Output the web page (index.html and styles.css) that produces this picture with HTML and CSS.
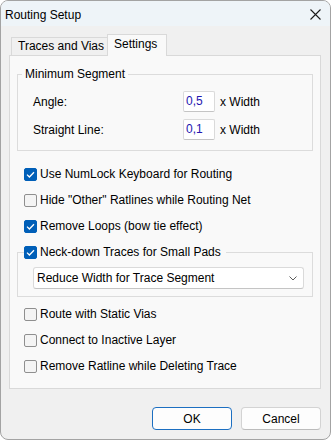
FILE: index.html
```html
<!DOCTYPE html>
<html lang="en">
<head>
    <meta charset="UTF-8">
    <title>Routing Setup</title>
    <link rel="stylesheet" href="styles.css">
</head>
<body>
    <div class="window">
        <div class="titlebar">
            <span class="title">Routing Setup</span>
            <svg class="close" width="11" height="11" viewBox="0 0 11 11">
                <path d="M0.5 0.5 L10.5 10.5 M10.5 0.5 L0.5 10.5" stroke="#1b1b1b" stroke-width="1.1" fill="none"/>
            </svg>
        </div>
        <div class="content">
            <div class="tabs">
                <div class="tab">Traces and Vias</div>
                <div class="tab active">Settings</div>
            </div>
            <div class="panel">
                <fieldset class="group segment">
                    <legend>Minimum Segment</legend>
                    <div class="segment-grid">
                        <span>Angle:</span>
                        <div class="edit">0,5</div>
                        <span class="unit">x Width</span>
                        <span>Straight Line:</span>
                        <div class="edit">0,1</div>
                        <span class="unit">x Width</span>
                    </div>
                </fieldset>

                <div class="checks first">
                    <div class="check on">
                        <span class="box"><svg width="13" height="13" viewBox="0 0 13 13"><path d="M3 6.6 L5.4 9 L10 4.2" stroke="#fff" stroke-width="1.3" fill="none"/></svg></span>
                        Use NumLock Keyboard for Routing
                    </div>
                    <div class="check">
                        <span class="box"></span>
                        Hide "Other" Ratlines while Routing Net
                    </div>
                    <div class="check on">
                        <span class="box"><svg width="13" height="13" viewBox="0 0 13 13"><path d="M3 6.6 L5.4 9 L10 4.2" stroke="#fff" stroke-width="1.3" fill="none"/></svg></span>
                        Remove Loops (bow tie effect)
                    </div>
                </div>

                <fieldset class="group neck">
                    <legend>
                        <span class="check on">
                            <span class="box"><svg width="13" height="13" viewBox="0 0 13 13"><path d="M3 6.6 L5.4 9 L10 4.2" stroke="#fff" stroke-width="1.3" fill="none"/></svg></span>
                            Neck-down Traces for Small Pads
                        </span>
                    </legend>
                    <div class="combo">
                        <span>Reduce Width for Trace Segment</span>
                        <svg width="8" height="5" viewBox="0 0 8 5"><path d="M0.5 0.5 L4 4 L7.5 0.5" stroke="#5c5c5c" stroke-width="1" fill="none"/></svg>
                    </div>
                </fieldset>

                <div class="checks last">
                    <div class="check">
                        <span class="box"></span>
                        Route with Static Vias
                    </div>
                    <div class="check">
                        <span class="box"></span>
                        Connect to Inactive Layer
                    </div>
                    <div class="check">
                        <span class="box"></span>
                        Remove Ratline while Deleting Trace
                    </div>
                </div>
            </div>
            <div class="buttons">
                <button class="btn default">OK</button>
                <button class="btn">Cancel</button>
            </div>
        </div>
    </div>
</body>
</html>
```

FILE: styles.css
```css
body {
    margin: 0;
    background-color: #ffffff;
    font-family: "Liberation Sans", Arial, sans-serif;
    font-size: 12px;
    color: #000000;
}
.window {
    width: 331px;
    height: 440px;
    box-sizing: border-box;
    border: 1px solid #a3a3a3;
    border-radius: 8px;
    overflow: hidden;
    background-color: #f0f0f0;
}
.titlebar {
    height: 25px;
    box-sizing: border-box;
    padding: 2px 9px 0 4px;
    display: flex;
    align-items: center;
    justify-content: space-between;
    background-color: #eef4f8;
}
.title {
    font-size: 12px;
}
.tabs {
    display: flex;
    align-items: flex-end;
    margin: 8px 0 0 10px;
    height: 22px;
    position: relative;
    z-index: 1;
}
.tab {
    box-sizing: border-box;
    border: 1px solid #d9d9d9;
    border-bottom: none;
    padding-left: 6px;
}
.tab:first-child {
    width: 96px;
    height: 18px;
    line-height: 17px;
    border-right: none;
    margin-bottom: 1px;
}
.tab.active {
    width: 60px;
    height: 22px;
    line-height: 18px;
    background-color: #f9f9f9;
}
.panel {
    margin: -1px 9px 0 8px;
    border: 1px solid #d9d9d9;
    background-color: #f9f9f9;
    padding: 11px 0 9px;
}
.group {
    margin: 0 7px;
    padding: 0;
    border: 1px solid #dcdcdc;
    min-inline-size: 0;
}
.group legend {
    line-height: 14px;
    height: 14px;
}
.segment legend {
    margin-left: 4px;
    padding: 0 3px;
}
.segment-grid {
    display: grid;
    grid-template-columns: 150px 32px auto;
    grid-auto-rows: 21px;
    row-gap: 7px;
    align-items: center;
    padding: 10px 0 10px 15px;
}
.edit {
    height: 21px;
    box-sizing: border-box;
    border: 1px solid #dadada;
    border-bottom-color: #c4c4c4;
    border-radius: 2px;
    background-color: #ffffff;
    padding-left: 2px;
    line-height: 19px;
    color: #2416b0;
}
.unit {
    padding-left: 5px;
}
.checks.first {
    margin-top: 10px;
}
.checks.last {
    margin-top: 4px;
}
.check {
    display: flex;
    align-items: center;
    height: 26px;
    padding-left: 14px;
}
.box {
    width: 13px;
    height: 13px;
    box-sizing: border-box;
    border: 1px solid #8f8f8f;
    border-radius: 2px;
    background-color: #f4f4f4;
    margin-right: 3px;
    flex: none;
}
.box svg {
    display: block;
    margin: -1px;
}
.check.on .box {
    border-color: #005fb8;
    background-color: #005fb8;
}
.neck {
    margin-top: 6px;
}
.neck legend {
    margin-left: 6px;
    padding: 0 5px 0 0;
}
.neck legend .check {
    height: 14px;
    padding-left: 0;
}
.combo {
    margin: 8px 8px 7px 15px;
    height: 22px;
    box-sizing: border-box;
    border: 1px solid #dadada;
    border-bottom-color: #c4c4c4;
    border-radius: 3px;
    background-color: #ffffff;
    display: flex;
    align-items: center;
    justify-content: space-between;
    padding: 0 6px 0 3px;
}
.buttons {
    display: flex;
    justify-content: flex-end;
    gap: 9px;
    margin-top: 18px;
    padding-right: 9px;
}
.btn {
    width: 80px;
    height: 23px;
    box-sizing: border-box;
    border: 1px solid #d3d3d3;
    border-bottom-color: #bcbcbc;
    border-radius: 4px;
    background-color: #fdfdfd;
    font-family: "Liberation Sans", Arial, sans-serif;
    font-size: 12px;
    color: #000000;
    padding: 0;
}
.btn.default {
    border-color: #1c6fc1;
}
```
